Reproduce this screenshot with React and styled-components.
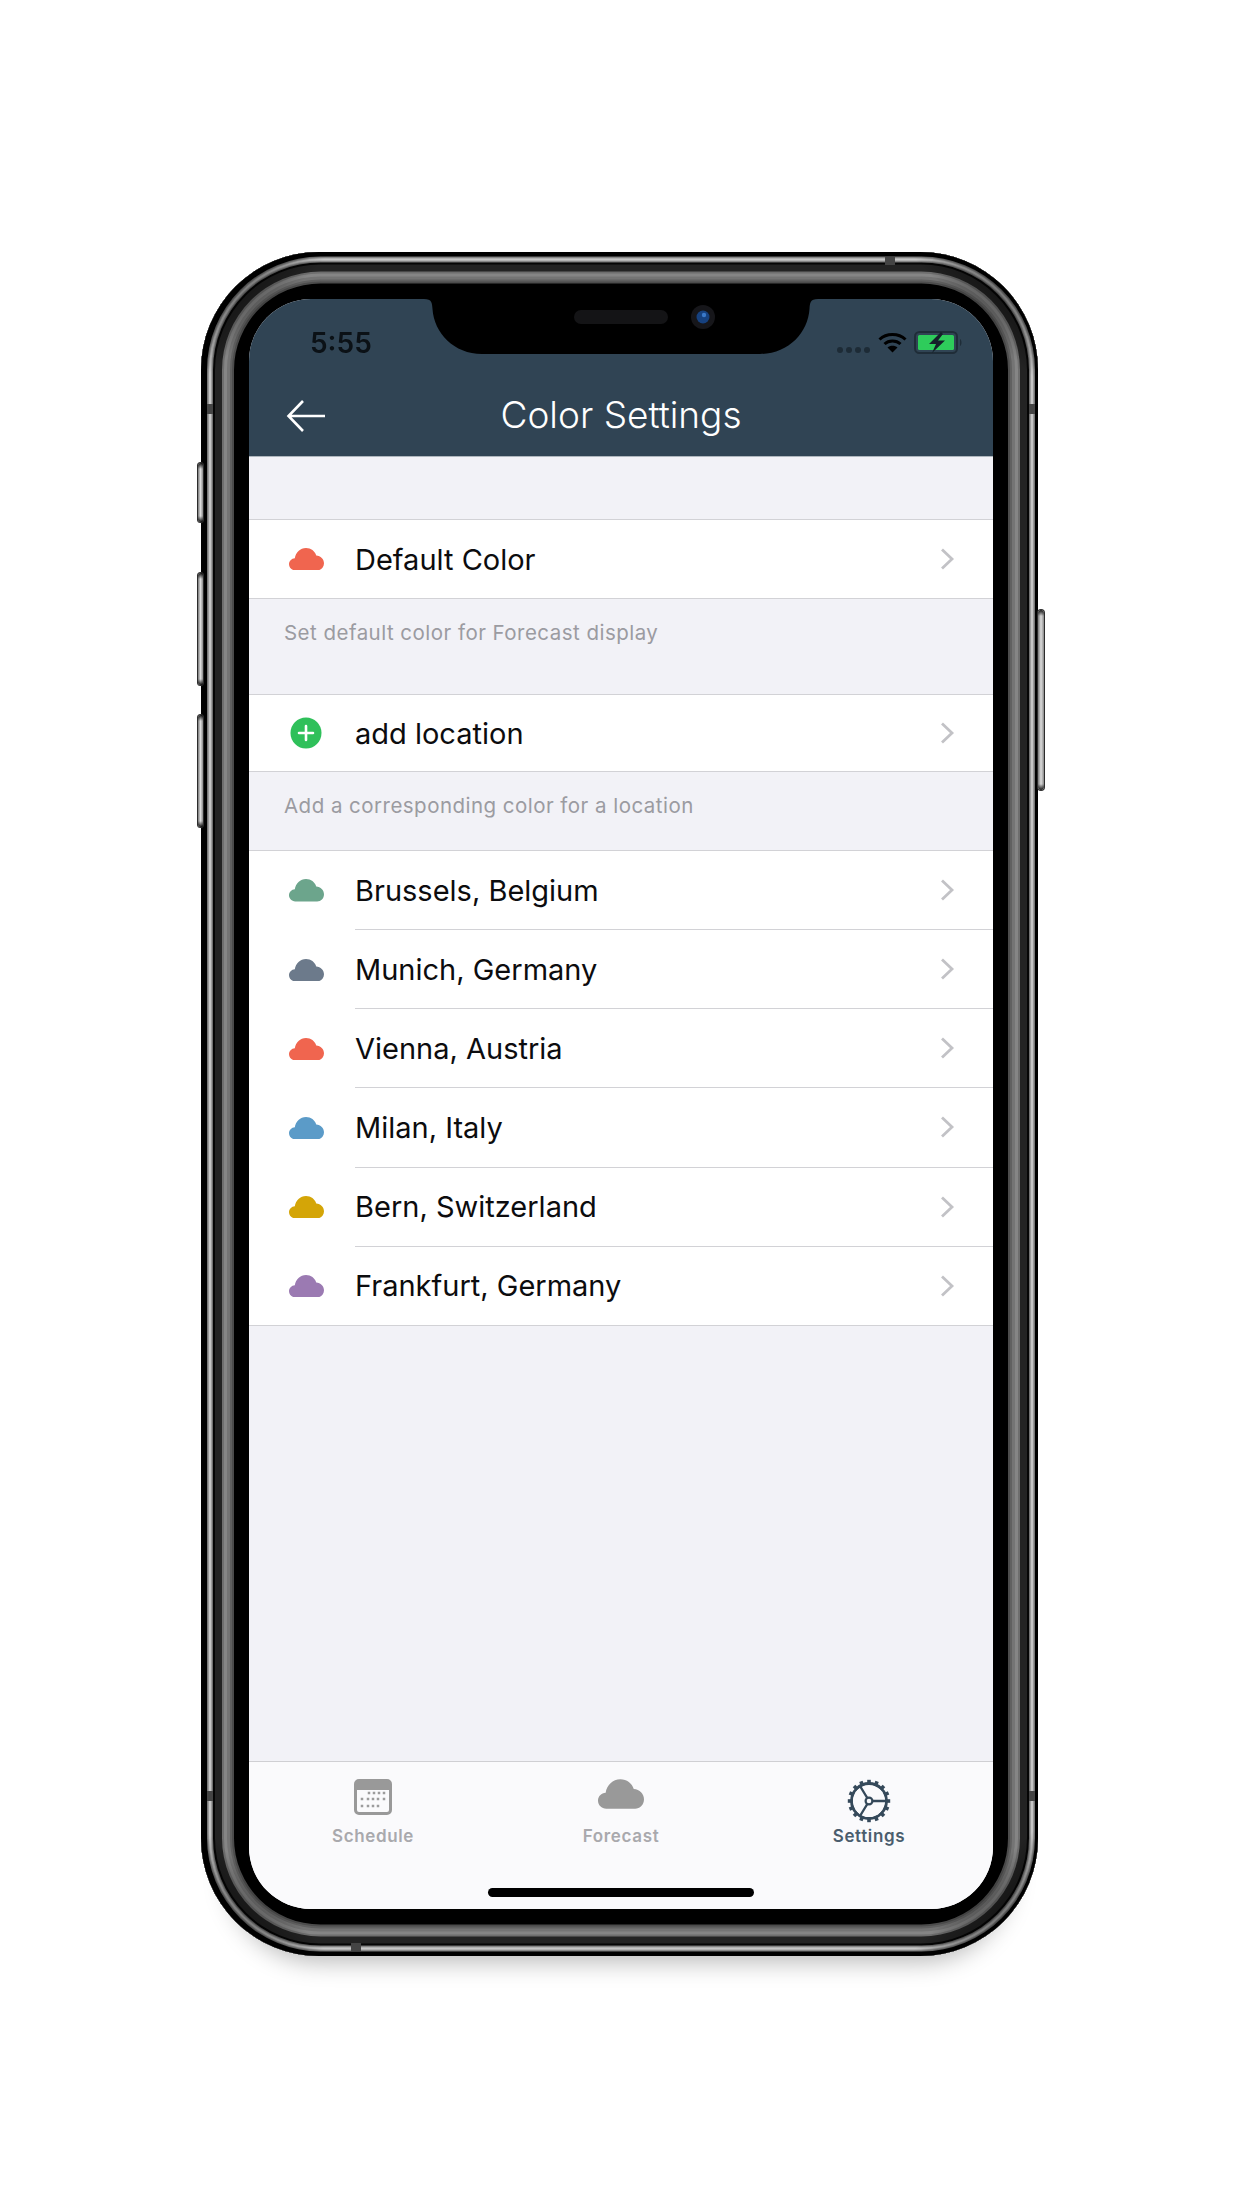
import React from "react";
import styled, { createGlobalStyle } from "styled-components";

const Global = createGlobalStyle`
  html, body { margin: 0; padding: 0; background: #fff; }
  #root { width: 1242px; height: 2208px; overflow: hidden; }
  * { box-sizing: border-box; }
`;

const Page = styled.div`
  display: flex;
  justify-content: flex-start;
  padding: 252px 0 0 201px;
  height: 2208px;
  background: #fff;
`;

const rings = [
  [4.5, "#000"], [5.5, "#777"], [6.5, "#999"], [8.5, "#c6c6c6"], [9.5, "#9c9c9c"], [10.5, "#707070"],
  [12.5, "#050505"], [19.5, "#232323"], [21.5, "#6e6e6e"], [24.5, "#858585"], [27.5, "#747474"], [29.5, "#606060"], [31.5, "#4c4c4c"],
];

const cornerShade = (dir, pos) =>
  `linear-gradient(${dir}, rgba(0,0,0,.6) 0%, rgba(0,0,0,.42) 28%, rgba(0,0,0,.18) 42%, transparent 50%) ${pos} / 130px 130px no-repeat`;

const Shell = styled.div`
  position: relative;
  width: 837px;
  height: 1704px;
  padding: 47px 45px 47px 48px;
  border-radius: 118px;
  background: #000;
  box-shadow: ${rings.map(([w, c]) => `inset 1.5px 0 0 ${w}px ${c}`).join(", ")},
    0 32px 24px -26px rgba(0, 0, 0, 0.28);

  &::before {
    content: "";
    position: absolute;
    inset: 0;
    border-radius: inherit;
    background: ${cornerShade("135deg", "left top")}, ${cornerShade("225deg", "right top")},
      ${cornerShade("45deg", "left bottom")}, ${cornerShade("315deg", "right bottom")};
  }
`;

const SideKey = styled.div`
  position: absolute;
  top: ${(p) => p.$top}px;
  ${(p) => (p.$right ? "right: -6px;" : "left: -3px;")}
  width: ${(p) => (p.$right ? 6 : 5)}px;
  height: ${(p) => p.$h}px;
  border-radius: 3px;
  background: linear-gradient(180deg, #111, transparent 6px, transparent calc(100% - 6px), #111),
    linear-gradient(90deg, #777, #ddd 50%, #888);
  box-shadow: 0 0 0 1px #2c2c2c;
`;

const Band = styled.div`
  position: absolute;
  background: #444;
  ${(p) => p.$css}
`;

const Screen = styled.div`
  position: relative;
  z-index: 1;
  width: 744px;
  height: 1610px;
  border-radius: 62px;
  overflow: hidden;
  display: flex;
  flex-direction: column;
  background: #f2f2f7;
  font-family: Inter, "Liberation Sans", sans-serif;
`;

const Header = styled.header`
  background: #304454;
  height: 158px;
  flex: none;
  border-bottom: 1px solid #aeb6bd;
  display: flex;
  flex-direction: column;
`;

const StatusBar = styled.div`
  height: 78px;
  padding: 30px 30px 0 61px;
  display: flex;
  justify-content: space-between;
  align-items: flex-start;
`;

const Time = styled.span`
  font-size: 28px;
  line-height: 28px;
  font-weight: 600;
  color: #0b1116;
  filter: blur(0.3px);
`;

const StatusIcons = styled.div`
  display: flex;
  align-items: center;
  height: 28px;
  margin-top: -1px;
`;

const Dots = styled.div`
  display: flex;
  gap: 3px;
  margin: 16px 8px 0 0;
`;

const Dot = styled.i`
  width: 6px;
  height: 6px;
  border-radius: 50%;
  background: #1d2b36;
`;

const NavBar = styled.div`
  position: relative;
  flex: 1;
  display: flex;
  align-items: center;
  justify-content: center;
`;

const BackButton = styled.div`
  position: absolute;
  left: 37px;
  top: 22px;
  width: 40px;
  height: 34px;
`;

const Title = styled.h1`
  margin: -4px 0 0;
  font-size: 37px;
  font-weight: 300;
  color: #fff;
`;

const Notch = styled.svg`
  position: absolute;
  left: 175px;
  top: 0;
`;

const Content = styled.main`
  flex: 1;
  padding-top: 62px;
  display: flex;
  flex-direction: column;
`;

const Group = styled.section`
  background: #fff;
  border-top: 1px solid #d2d2d6;
  border-bottom: 1px solid #d2d2d6;
`;

const Row = styled.div`
  height: ${(p) => p.$h}px;
  display: flex;
  align-items: center;
`;

const IconSlot = styled.div`
  width: 106px;
  flex: none;
  display: flex;
  justify-content: center;
  padding-left: 8px;
`;

const RowBody = styled.div`
  flex: 1;
  align-self: stretch;
  display: flex;
  align-items: center;
  justify-content: space-between;
  padding-right: 38px;
  ${(p) => (p.$divider ? "border-bottom: 1px solid #d2d2d6;" : "")}
`;

const RowLabel = styled.span`
  font-size: 29px;
  color: #0c0c0e;
`;

const Footnote = styled.p`
  margin: 0;
  height: ${(p) => p.$h}px;
  padding: 20px 0 0 35px;
  font-size: 20.5px;
  line-height: 28px;
  letter-spacing: 0.47px;
  color: #9b9ba1;
`;

const TabBar = styled.nav`
  height: 148px;
  flex: none;
  position: relative;
  background: #fafafc;
  border-top: 1px solid #cfcfd3;
  display: grid;
  grid-template-columns: 1fr 1fr 1fr;
`;

const Tab = styled.div`
  display: flex;
  flex-direction: column;
  align-items: center;
  padding-top: 17px;
  color: ${(p) => (p.$active ? "#4a5d6d" : "#a9a9ad")};
`;

const TabIcon = styled.div`
  height: 46px;
  display: flex;
  align-items: flex-start;
`;

const TabLabel = styled.span`
  font-size: 17px;
  line-height: 24px;
  font-weight: 600;
  letter-spacing: 0.65px;
  margin-top: -1px;
`;

const HomeBar = styled.div`
  position: absolute;
  left: 239px;
  bottom: 12px;
  width: 266px;
  height: 9px;
  border-radius: 5px;
  background: #000;
`;

const CLOUD = "M6.5 23 C2.8 23 0 20.2 0 16.8 C0 13.4 2.6 10.9 6 10.6 C6.8 4.6 11.6 0 17.5 0 C22.6 0 26.6 3.2 28 7.6 C32.6 7.8 36 11.4 36 15.6 C36 20 32.8 23 29 23 Z";

const Cloud = ({ color, w = 35, h = 22.4 }) => (
  <svg width={w} height={h} viewBox="0 0 36 23"><path d={CLOUD} fill={color} /></svg>
);

const Plus = () => (
  <svg width="32" height="32" viewBox="0 0 32 32">
    <circle cx="16" cy="16" r="15.5" fill="#2fc05a" />
    <path d="M16 9v14M9 16h14" stroke="#fff" strokeWidth="2.6" strokeLinecap="round" />
  </svg>
);

const Chevron = () => (
  <svg width="16" height="24" viewBox="0 0 16 24">
    <path d="M3 2.5 L13 12 L3 21.5" fill="none" stroke="#c2c2c6" strokeWidth="2.8" />
  </svg>
);

const Wifi = () => (
  <svg width="29" height="21" viewBox="0 0 29 21" style={{ marginRight: 7 }}>
    <path d="M1.5 7.5 C8.5 0.8 20.5 0.8 27.5 7.5" fill="none" stroke="#000" strokeWidth="3" />
    <path d="M6.5 12 C10.8 8 18.2 8 22.5 12" fill="none" stroke="#000" strokeWidth="3" />
    <path d="M14.5 20.5 L9.5 15.5 C12 13 17 13 19.5 15.5 Z" fill="#000" />
  </svg>
);

const Battery = () => (
  <svg width="49" height="23" viewBox="0 0 49 23">
    <rect x="1" y="1" width="42" height="21" rx="4.5" fill="none" stroke="#1f2d38" strokeWidth="2" />
    <rect x="4" y="4" width="36" height="15" rx="1.5" fill="#2ecc5b" />
    <path d="M46 8 C48 9 48 14 46 15 Z" fill="#1f2d38" />
    <path d="M27 1 L15 13 H22 L18 22 L31 9.5 H24 L29 3 Z" fill="#15202a" />
  </svg>
);

const Calendar = () => (
  <svg width="38" height="36" viewBox="0 0 38 36">
    <rect x="1.5" y="1.5" width="35" height="33" rx="3.5" fill="none" stroke="#999" strokeWidth="3" />
    <path d="M1 5 a4 4 0 0 1 4-4 h28 a4 4 0 0 1 4 4 v6 H1 Z" fill="#999" />
    {[[15, 14], [20, 14], [25, 14], [30, 14], [8, 20], [14, 20], [19, 20], [24, 20], [30, 20], [8, 27], [14, 27], [19, 27], [24, 27]].map(([x, y]) => (
      <rect key={`${x}-${y}`} x={x - 1.25} y={y - 1.25} width="2.5" height="2.5" fill="#9c9c9c" />
    ))}
  </svg>
);

const Gear = () => {
  const teeth = Array.from({ length: 16 }, (_, i) => (i * 360) / 16);
  return (
    <svg width="44" height="44" viewBox="0 0 44 44">
      <circle cx="22" cy="22" r="17.5" fill="none" stroke="#35495a" strokeWidth="2.8" />
      {teeth.map((a) => (
        <rect key={a} x="20.2" y="0.8" width="3.6" height="5" fill="#35495a" transform={`rotate(${a} 22 22)`} />
      ))}
      <circle cx="22" cy="22" r="3.4" fill="none" stroke="#35495a" strokeWidth="2.2" />
      <path d="M25.4 22 H39 M20.3 19 L13 7 M20.3 25 L13 37" stroke="#35495a" strokeWidth="2.4" fill="none" />
    </svg>
  );
};

const locations = [
  ["Brussels, Belgium", "#6ca58c"],
  ["Munich, Germany", "#6c7a8b"],
  ["Vienna, Austria", "#f0654f"],
  ["Milan, Italy", "#5b9bc8"],
  ["Bern, Switzerland", "#d4a507"],
  ["Frankfurt, Germany", "#9b7ab2"],
];

export default function App() {
  return (
    <>
      <Global />
      <Page>
        <Shell>
          <SideKey $top={211} $h={59} />
          <SideKey $top={321} $h={112} />
          <SideKey $top={463} $h={112} />
          <SideKey $right $top={358} $h={180} />
          <Band $css="top: 5px; left: 684px; width: 10px; height: 8px;" />
          <Band $css="top: 152px; left: 6px; width: 6px; height: 10px;" />
          <Band $css="top: 152px; right: 3px; width: 6px; height: 10px;" />
          <Band $css="bottom: 155px; left: 6px; width: 6px; height: 10px;" />
          <Band $css="bottom: 155px; right: 3px; width: 6px; height: 10px;" />
          <Band $css="bottom: 5px; left: 150px; width: 10px; height: 8px;" />
          <Screen>
            <Header>
              <StatusBar>
                <Time>5:55</Time>
                <StatusIcons>
                  <Dots><Dot /><Dot /><Dot /><Dot /></Dots>
                  <Wifi />
                  <Battery />
                </StatusIcons>
              </StatusBar>
              <NavBar>
                <BackButton>
                  <svg width="40" height="34" viewBox="0 0 40 34">
                    <path d="M39 17 H3 M17 2 L2.5 17 L17 32" fill="none" stroke="#fff" strokeWidth="2.6" />
                  </svg>
                </BackButton>
                <Title>Color Settings</Title>
              </NavBar>
            </Header>
            <Notch width="394" height="56" viewBox="0 0 394 56">
              <path d="M0 0 H394 C386 0 386 4 385.5 10 C384 34 364 55 336 55 H58 C30 55 10 34 8.5 10 C8 4 8 0 0 0 Z" fill="#000" />
              <rect x="150" y="11" width="94" height="14" rx="7" fill="#141416" />
              <circle cx="279" cy="18" r="12" fill="#16161a" />
              <circle cx="279" cy="18" r="6.5" fill="#16417f" />
              <circle cx="280" cy="16" r="2.2" fill="#3a79c9" />
            </Notch>
            <Content>
              <Group>
                <Row $h={78}>
                  <IconSlot><Cloud color="#f0654f" /></IconSlot>
                  <RowBody>
                    <RowLabel>Default Color</RowLabel>
                    <Chevron />
                  </RowBody>
                </Row>
              </Group>
              <Footnote $h={95}>Set default color for Forecast display</Footnote>
              <Group>
                <Row $h={76}>
                  <IconSlot><Plus /></IconSlot>
                  <RowBody>
                    <RowLabel>add location</RowLabel>
                    <Chevron />
                  </RowBody>
                </Row>
              </Group>
              <Footnote $h={78}>Add a corresponding color for a location</Footnote>
              <Group>
                {locations.map(([name, color], i) => (
                  <Row key={name} $h={i === locations.length - 1 ? 78.25 : 79.15}>
                    <IconSlot><Cloud color={color} /></IconSlot>
                    <RowBody $divider={i < locations.length - 1}>
                      <RowLabel>{name}</RowLabel>
                      <Chevron />
                    </RowBody>
                  </Row>
                ))}
              </Group>
            </Content>
            <TabBar>
              <Tab>
                <TabIcon><Calendar /></TabIcon>
                <TabLabel>Schedule</TabLabel>
              </Tab>
              <Tab>
                <TabIcon><Cloud color="#999" w={46} h={30} /></TabIcon>
                <TabLabel>Forecast</TabLabel>
              </Tab>
              <Tab $active>
                <TabIcon><Gear /></TabIcon>
                <TabLabel>Settings</TabLabel>
              </Tab>
              <HomeBar />
            </TabBar>
          </Screen>
        </Shell>
      </Page>
    </>
  );
}
